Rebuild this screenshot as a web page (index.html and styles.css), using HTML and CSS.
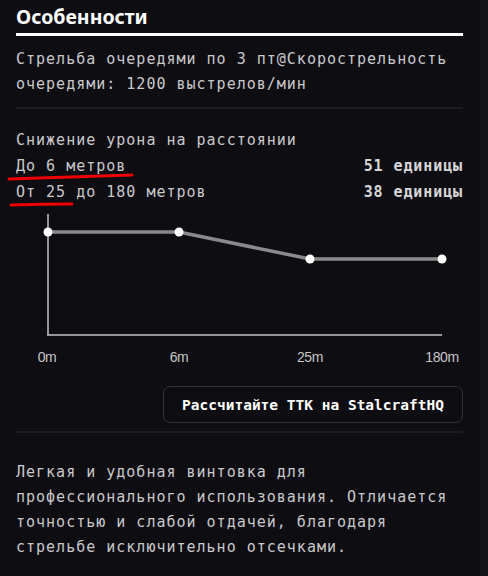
FILE: index.html
```html
<!DOCTYPE html>
<html lang="ru">
<head>
    <meta charset="UTF-8">
    <meta name="viewport" content="width=device-width, initial-scale=1.0">
    <title>Особенности</title>
    <link rel="stylesheet" href="styles.css">
</head>
<body>
    <div class="page">
        <div class="panel">
            <h2 class="title">Особенности</h2>

            <div class="block">
                <p class="text">Стрельба очередями по 3 пт@Скорострельность очередями: 1200 выстрелов/мин</p>
            </div>

            <div class="block falloff">
                <p class="text">Снижение урона на расстоянии</p>
                <div class="row">
                    <span>До 6 метров</span>
                    <b>51 единицы</b>
                </div>
                <div class="row">
                    <span>От 25 до 180 метров</span>
                    <b>38 единицы</b>
                </div>

                <!-- red marker strokes under the rows -->
                <svg class="marks" width="140" height="60" viewBox="0 0 140 60">
                    <path d="M9 25 Q70 23 132 21" />
                    <path d="M11 51 Q40 50 72 50" />
                </svg>

                <svg class="chart" width="448" height="152" viewBox="0 0 448 152">
                    <line class="axis" x1="32" y1="0" x2="32" y2="121" />
                    <line class="axis" x1="31" y1="121" x2="426" y2="121" />
                    <polyline class="curve" points="32,18 163,18 294,45 426,45" />
                    <circle cx="32" cy="18" r="4.5" />
                    <circle cx="163" cy="18" r="4.5" />
                    <circle cx="294" cy="45" r="4.5" />
                    <circle cx="426" cy="45" r="4.5" />
                    <text x="31" y="148">0m</text>
                    <text x="163" y="148">6m</text>
                    <text x="294" y="148">25m</text>
                    <text x="426" y="148">180m</text>
                </svg>

                <div class="actions">
                    <button class="ttk">Рассчитайте ТТК на StalcraftHQ</button>
                </div>
            </div>

            <div class="block last">
                <p class="text">Легкая и удобная винтовка для профессионального использования. Отличается точностью и слабой отдачей, благодаря стрельбе исключительно отсечками.</p>
            </div>
        </div>
        <div class="scroll"></div>
    </div>
</body>
</html>
```

FILE: styles.css
```css
* {
    box-sizing: border-box;
}
html, body {
    margin: 0;
    height: 100%;
}
body {
    background: #0e0d12;
    color: #c9c9cb;
    font-family: "DejaVu Sans Mono", monospace;
    overflow: hidden;
}
.page {
    display: flex;
    height: 100%;
}
.panel {
    width: 480px;
    padding: 0 17px 0 16px;
}
.scroll {
    flex: 1;
    background: #141318;
}
.title {
    margin: 0;
    padding-top: 4px;
    padding-bottom: 4px;
    font-family: "Noto Sans", sans-serif;
    font-size: 19.5px;
    font-weight: 700;
    line-height: 25px;
    color: #fff;
    border-bottom: 3px solid #fff;
}
.block {
    padding: 11px 0 10px;
    border-bottom: 2px solid #1c1b21;
}
.block.last {
    border-bottom: none;
    padding-top: 27px;
}
.text {
    margin: 0;
    font-size: 15px;
    line-height: 25px;
    letter-spacing: 1px;
}
.falloff {
    position: relative;
    padding-top: 19px;
    padding-bottom: 8px;
}
.row {
    display: flex;
    justify-content: space-between;
    font-size: 15px;
    line-height: 26px;
    letter-spacing: 1px;
}
.row b {
    color: #d6d6d8;
    letter-spacing: 0.9px;
}
.marks {
    position: absolute;
    left: -16px;
    top: 45px;
}
.marks path {
    fill: none;
    stroke: #f00000;
    stroke-width: 3;
    stroke-linecap: round;
}
.chart {
    display: block;
    margin-top: 9px;
}
.chart .axis {
    stroke: #c4c4c4;
    stroke-width: 1.5;
}
.chart .curve {
    fill: none;
    stroke: #8a8a8a;
    stroke-width: 3.5;
}
.chart circle {
    fill: #fff;
}
.chart text {
    font-family: "Liberation Sans", Arial, sans-serif;
    font-size: 14px;
    fill: #c6c6c6;
    text-anchor: middle;
    letter-spacing: -0.4px;
}
.actions {
    display: flex;
    justify-content: flex-end;
    margin-top: 20px;
}
.ttk {
    width: 300px;
    height: 37px;
    background: #0e0d12;
    border: 1px solid #34333a;
    border-radius: 7px;
    color: #fff;
    font-family: "DejaVu Sans Mono", monospace;
    font-size: 14.5px;
    font-weight: 700;
    cursor: pointer;
}
```
